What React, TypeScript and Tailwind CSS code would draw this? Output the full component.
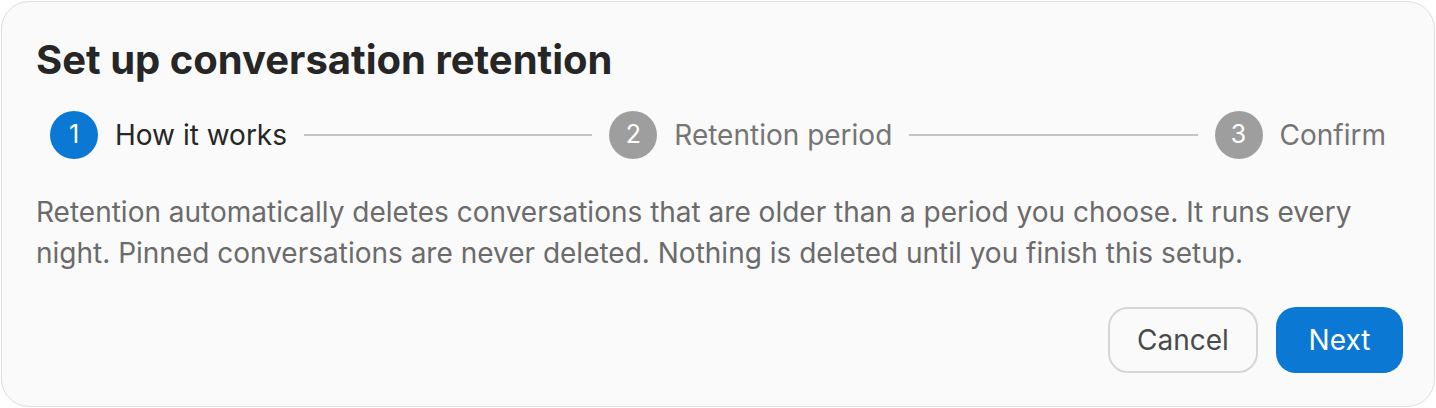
import React from "react";

function Step({ n, label, active }: { n: number; label: string; active?: boolean }) {
  return (
    <div className="flex items-center gap-[17px] shrink-0">
      <div
        className={
          "w-12 h-12 rounded-full flex items-center justify-center text-[25px] text-white " +
          (active ? "bg-[#0b78d3]" : "bg-[#9e9e9e]")
        }
      >
        {n}
      </div>
      <span className={"text-[28px] " + (active ? "text-[#262626]" : "text-[#757575]")}>{label}</span>
    </div>
  );
}

export default function App() {
  return (
    <div className="w-[1436px] h-[408px] bg-white p-px" style={{ fontFamily: "Inter, 'Noto Sans', sans-serif" }}>
      <div className="h-full rounded-[28px] border border-[#dedede] bg-[#fafafa] pl-[34px] pr-[31px] pt-[34px]">
        <h1 className="text-[40px] font-bold text-[#262626] leading-[48px]">
          Set up conversation retention
        </h1>
        <div className="flex items-center gap-[17px] mt-[27px] pl-[14px] pr-[17px]">
          <Step n={1} label="How it works" active />
          <div className="flex-1 h-[2px] bg-[#c4c4c4]" />
          <Step n={2} label="Retention period" />
          <div className="flex-1 h-[2px] bg-[#c4c4c4]" />
          <Step n={3} label="Confirm" />
        </div>
        <p className="mt-[33px] text-[28px] leading-[41px] text-[#6b6b6b]">
          Retention automatically deletes conversations that are older than a period you choose. It runs every night.
          Pinned conversations are never deleted. Nothing is deleted until you finish this setup.
        </p>
        <div className="flex justify-end gap-[18px] mt-[33px]">
          <button className="h-[66px] w-[150px] rounded-[20px] border-2 border-[#d6d6d6] bg-transparent text-[28px] text-[#4a4a4a]">
            Cancel
          </button>
          <button className="h-[66px] w-[127px] rounded-[20px] bg-[#0b78d3] text-[28px] text-white">Next</button>
        </div>
      </div>
    </div>
  );
}
